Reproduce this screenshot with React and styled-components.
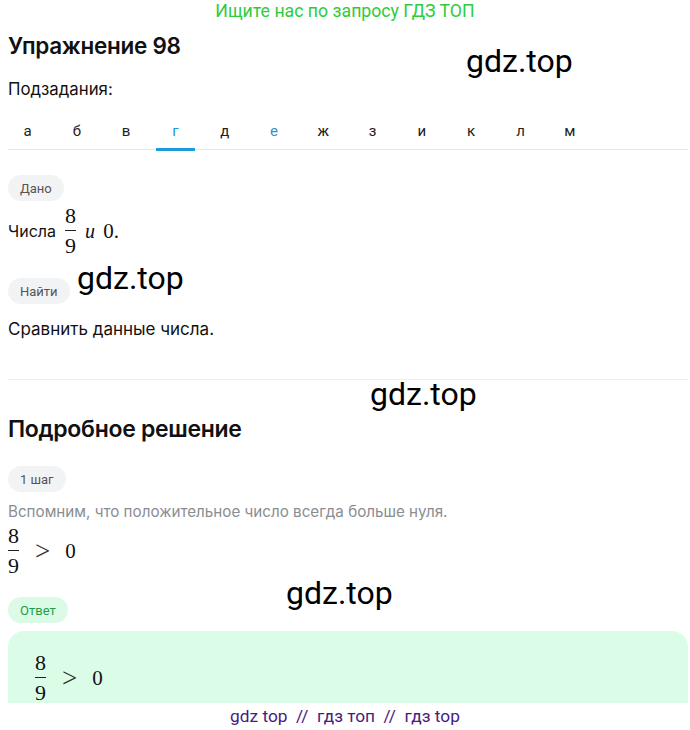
import React from 'react';
import styled, { createGlobalStyle } from 'styled-components';

const GlobalStyle = createGlobalStyle`
  html, body { margin: 0; padding: 0; background: #fff; overflow: hidden; }
  body { font-family: Inter, Roboto, "Liberation Sans", sans-serif; color: #111; }
`;

const tabs = ['а', 'б', 'в', 'г', 'д', 'е', 'ж', 'з', 'и', 'к', 'л', 'м'];

const Fraction = ({ top, bottom }) => (
  <Frac>
    <span>{top}</span>
    <Bar />
    <span>{bottom}</span>
  </Frac>
);

const Compare = () => (
  <Expr>
    <Fraction top="8" bottom="9" />
    <Rel>&gt;</Rel>
    <MathText>0</MathText>
  </Expr>
);

const App = () => {
  return (
    <Page>
      <GlobalStyle />

      {/*Banner*/}
      <Banner>Ищите нас по запросу ГДЗ ТОП</Banner>

      <Content>
        <Title>Упражнение 98</Title>
        <Label>Подзадания:</Label>

        {/*Tabs*/}
        <TabRow>
          {tabs.map((t) => (
            <Tab key={t} active={t === 'г'} visited={t === 'е'}>{t}</Tab>
          ))}
        </TabRow>

        <Pill mt={25}>Дано</Pill>
        <MathLine>
          <span>Числа</span>
          <Fraction top="8" bottom="9" />
          <MathText><i>и</i> 0.</MathText>
        </MathLine>

        <Pill mt={21}>Найти</Pill>
        <Text>Сравнить данные числа.</Text>

        <Divider />

        <SubTitle>Подробное решение</SubTitle>

        <Pill mt={23}>1 шаг</Pill>
        <Hint>Вспомним, что положительное число всегда больше нуля.</Hint>
        <Compare />

        <Pill mt={20} green>Ответ</Pill>
        <AnswerBox>
          <Compare />
        </AnswerBox>
      </Content>

      {/*Watermarks*/}
      <Mark x={466} y={41}>gdz.top</Mark>
      <Mark x={77} y={258}>gdz.top</Mark>
      <Mark x={370} y={374}>gdz.top</Mark>
      <Mark x={286} y={573}>gdz.top</Mark>

      <Footer>gdz top&nbsp; //&nbsp; гдз топ&nbsp; //&nbsp; гдз top</Footer>
    </Page>
  );
};

export default App;

const Page = styled.div`
  position: relative;
  width: 690px;
  height: 730px;
`;

const Banner = styled.div`
  height: 22px;
  line-height: 22px;
  text-align: center;
  color: #2dcc3a;
  font-family: Roboto, "Liberation Sans", sans-serif;
  font-size: 17.7px;
`;

const Content = styled.div`
  padding: 0 2px 0 8px;
  display: flex;
  flex-direction: column;
  align-items: flex-start;
`;

const Title = styled.h1`
  margin: 10px 0 0;
  font-size: 22.5px;
  font-weight: 600;
  line-height: 28px;
  letter-spacing: -0.3px;
`;

const SubTitle = styled(Title)`
  margin: 35px 0 0;
  font-size: 23px;
`;

const Label = styled.div`
  margin-top: 19px;
  font-size: 16.8px;
  line-height: 20px;
`;

const TabRow = styled.div`
  align-self: stretch;
  margin-top: 12px;
  display: flex;
  gap: 10.3px;
  border-bottom: 1px solid #e6e7e9;
`;

const Tab = styled.div`
  width: 39px;
  height: 35px;
  padding-top: 2px;
  display: flex;
  align-items: center;
  justify-content: center;
  font-family: Roboto, "Liberation Sans", sans-serif;
  font-size: 15px;
  color: ${({ active, visited }) => (active ? '#1e95d4' : visited ? '#3a8fc6' : '#222')};
  border-bottom: 3px solid ${({ active }) => (active ? '#1e9ad8' : 'transparent')};
  margin-bottom: -2px;
`;

const Pill = styled.div`
  margin-top: ${({ mt }) => mt}px;
  height: 26px;
  padding: 0 12px;
  border-radius: 13px;
  display: flex;
  align-items: center;
  font-family: Roboto, "Liberation Sans", sans-serif;
  font-size: 13px;
  color: ${({ green }) => (green ? '#1f9e4a' : '#555')};
  background: ${({ green }) => (green ? '#dbfbe6' : '#f2f3f5')};
`;

const MathLine = styled.div`
  margin-top: 4px;
  display: flex;
  align-items: center;
  gap: 7px;
  font-size: 16px;
  & > span:first-child { margin-right: 2px; }
`;

const MathText = styled.span`
  font-family: "Liberation Serif", "DejaVu Serif", serif;
  font-size: 21px;
  margin-left: 2px;
  & i { margin-right: 3px; font-size: 20px; }
`;

const Frac = styled.span`
  display: inline-flex;
  flex-direction: column;
  align-items: center;
  font-family: "Liberation Serif", "DejaVu Serif", serif;
  font-size: 22px;
  line-height: 22px;
`;

const Bar = styled.span`
  width: 11px;
  height: 1px;
  margin: 3px 0 4px;
  background: #222;
`;

const Text = styled.div`
  margin-top: 15px;
  font-size: 17px;
  line-height: 20px;
`;

const Divider = styled.div`
  align-self: stretch;
  margin-top: 40px;
  height: 1px;
  background: #eceef0;
`;

const Hint = styled.div`
  margin-top: 11px;
  font-size: 15.2px;
  line-height: 18px;
  color: #8a8d92;
`;

const Expr = styled.div`
  margin-top: 4px;
  display: flex;
  align-items: center;
`;

const Rel = styled.span`
  margin: 0 13px 0 16px;
  font-family: "Liberation Serif", "DejaVu Serif", serif;
  font-size: 27px;
  line-height: 22px;
  color: #333;
`;

const AnswerBox = styled.div`
  align-self: stretch;
  margin-top: 8px;
  padding: 17px 27px 20px;
  min-height: 80px;
  background: #dbfde7;
  border-radius: 16px 16px 0 0;
`;

const Mark = styled.div`
  position: absolute;
  left: ${({ x }) => x}px;
  top: ${({ y }) => y}px;
  font-family: Roboto, "Liberation Sans", sans-serif;
  font-size: 32px;
  line-height: 40px;
  color: #000;
`;

const Footer = styled.div`
  position: fixed;
  left: 0;
  right: 0;
  bottom: 0;
  height: 27px;
  line-height: 26px;
  text-align: center;
  background: #fff;
  color: #4a1a7e;
  font-family: Roboto, "Liberation Sans", sans-serif;
  font-size: 17.3px;
`;
